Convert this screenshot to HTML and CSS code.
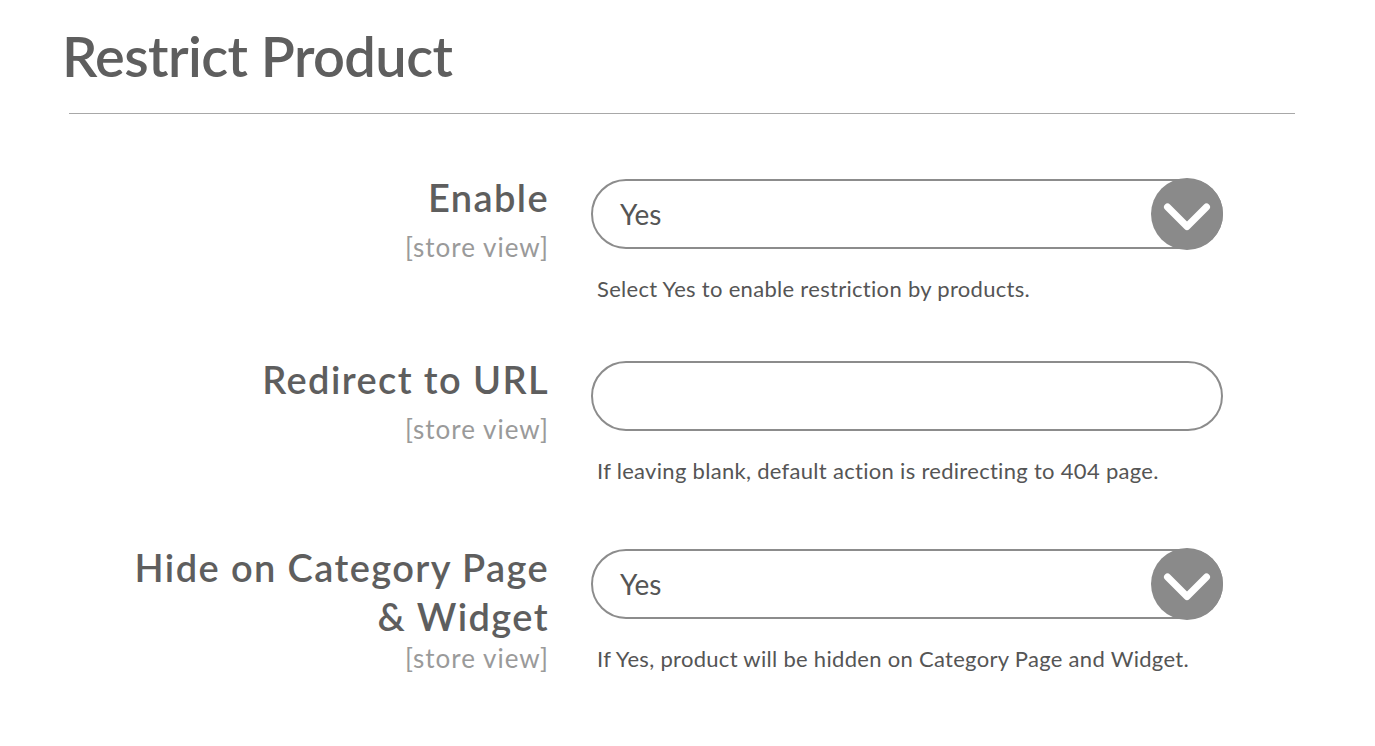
FILE: index.html
```html
<!DOCTYPE html>
<html lang="en">
<head>
    <meta charset="UTF-8">
    <title>Restrict Product</title>
    <link rel="stylesheet" href="styles.css">
</head>
<body>
    <div class="container">
        <h1>Restrict Product</h1>
        <div class="divider"></div>
        <div class="form">
            <div class="row">
                <div class="label">
                    <span class="label-title">Enable</span>
                    <span class="scope">[store view]</span>
                </div>
                <div class="control">
                    <div class="select">
                        <span>Yes</span>
                        <span class="arrow">
                            <svg width="72" height="72" viewBox="0 0 72 72"><path d="M16.5 29 L36 48.5 L55.5 29" fill="none" stroke="#fff" stroke-width="7" stroke-linecap="round" stroke-linejoin="round"/></svg>
                        </span>
                    </div>
                    <div class="note">Select Yes to enable restriction by products.</div>
                </div>
            </div>
            <div class="row">
                <div class="label">
                    <span class="label-title">Redirect to URL</span>
                    <span class="scope">[store view]</span>
                </div>
                <div class="control">
                    <div class="select"></div>
                    <div class="note">If leaving blank, default action is redirecting to 404 page.</div>
                </div>
            </div>
            <div class="row wide">
                <div class="label">
                    <span class="label-title">Hide on Category Page<br>&amp; Widget</span>
                    <span class="scope tight">[store view]</span>
                </div>
                <div class="control">
                    <div class="select">
                        <span>Yes</span>
                        <span class="arrow">
                            <svg width="72" height="72" viewBox="0 0 72 72"><path d="M16.5 29 L36 48.5 L55.5 29" fill="none" stroke="#fff" stroke-width="7" stroke-linecap="round" stroke-linejoin="round"/></svg>
                        </span>
                    </div>
                    <div class="note">If Yes, product will be hidden on Category Page and Widget.</div>
                </div>
            </div>
        </div>
    </div>
</body>
</html>
```

FILE: styles.css
```css
body {
    font-family: Lato, "Open Sans", sans-serif;
    background-color: #ffffff;
    color: #5e5e5e;
    margin: 0;
    padding: 0;
}
.container {
    padding: 22px 80px 0 62px;
}
h1 {
    font-size: 56px;
    font-weight: 600;
    letter-spacing: -0.6px;
    color: #5e5e5e;
    margin: 0;
    line-height: 68px;
}
.divider {
    height: 1px;
    background-color: #a8a8a8;
    margin: 23px 0 0 7px;
    width: 1226px;
}
.form {
    padding-top: 65px;
    padding-left: 7px;
}
.row {
    display: grid;
    grid-template-columns: 480px 632px;
    column-gap: 42px;
    margin-bottom: 59px;
}
.row.wide {
    padding-top: 6px;
}
.label {
    display: flex;
    flex-direction: column;
    align-items: flex-end;
    text-align: right;
    margin-top: -6px;
}
.label-title {
    font-size: 38px;
    font-weight: 600;
    letter-spacing: 1.4px;
    line-height: 49px;
    color: #5e5e5e;
}
.scope {
    font-size: 26px;
    letter-spacing: 1px;
    line-height: 34px;
    margin-top: 8px;
    color: #9a9a9a;
}
.scope.tight {
    line-height: 30px;
    margin-top: 2px;
}
.select {
    height: 66px;
    border: 2px solid #8c8c8c;
    border-radius: 36px;
    display: flex;
    align-items: center;
    justify-content: space-between;
    padding-left: 27px;
    font-size: 28px;
    color: #555555;
}
.arrow {
    width: 72px;
    height: 72px;
    border-radius: 50%;
    background-color: #8a8a8a;
    margin-right: -2px;
}
.arrow svg {
    display: block;
}
.note {
    font-size: 22px;
    letter-spacing: 0.3px;
    line-height: 27px;
    color: #555555;
    margin-top: 26px;
    padding-left: 6px;
}
```
